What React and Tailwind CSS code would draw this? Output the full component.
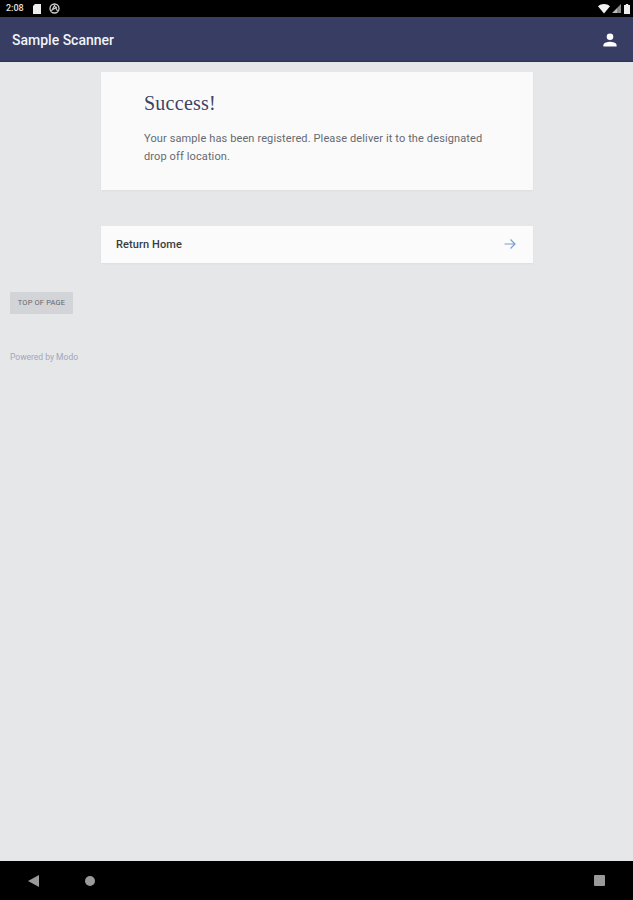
import React from "react";

export default function App() {
  return (
    <div className="flex flex-col w-[633px] h-[900px] overflow-hidden bg-[#e5e7e9] font-['Roboto',sans-serif]">
      <div className="h-[17px] shrink-0 bg-black flex items-center justify-between pl-[6px] pr-[3px]">
        <div className="flex items-center gap-[8px]">
          <span className="text-[9px] font-medium leading-none text-[#e0e0e0]">2:08</span>
          <svg width="8" height="10" viewBox="0 0 8 10" className="ml-[1px]"><path d="M2 0h6v10H0V2z" fill="#eee" /></svg>
          <svg width="11" height="11" viewBox="0 0 11 11"><circle cx="5.5" cy="5.5" r="4.5" fill="none" stroke="#ccc" strokeWidth="1.3" /><path d="M2.5 8 5.5 2.5 8.5 8M4 6.5 8 4" fill="none" stroke="#ccc" strokeWidth="1.2" /></svg>
        </div>
        <div className="flex items-center gap-[2px]">
          <svg width="12" height="10" viewBox="0 0 12 10"><path d="M0 2.2C3.4-.7 8.6-.7 12 2.2L6 9.5z" fill="#f2f2f2" /></svg>
          <svg width="9" height="9" viewBox="0 0 9 9"><path d="M9 0v9H0z" fill="#8a8a8a" /><path d="M5 4.5V9H0.5z" fill="#bbb" /></svg>
          <svg width="6" height="10" viewBox="0 0 6 10" className="ml-[1px]"><path d="M1.8 0h2.4v1H6v9H0V1h1.8z" fill="#eee" /></svg>
        </div>
      </div>

      <header className="h-[45px] shrink-0 bg-[#373d63] flex items-center justify-between pl-3 pr-[14px] pt-[2px] border-b border-[#2e3353]">
        <span className="text-[14px] font-medium text-[#f2f3f8]">Sample Scanner</span>
        <svg width="18" height="18" viewBox="0 0 24 24" fill="#ffffff"><path d="M12 12a4.4 4.4 0 1 0 0-8.800 4.400 4.400 0 0 0 0 8.800zm0 2.200c-2.900 0-8.800 1.500-8.800 4.400v2.200h17.600v-2.200c0-2.900-5.900-4.400-8.800-4.400z" /></svg>
      </header>

      <main className="flex-1 flex flex-col">
        <div className="mt-[10px] ml-[101px] w-[432px] h-[118px] bg-[#fafafa] shadow-[0_1px_2px_rgba(0,0,0,0.04)] pl-[43px] pr-[30px] pt-[19px]">
          <h1 className="font-['Liberation_Serif',serif] text-[20px] leading-[24px] text-[#3d4364] tracking-[0.25px]">Success!</h1>
          <p className="mt-[15px] text-[11px] leading-[17.5px] text-[#666a70] tracking-[0.12px]">Your sample has been registered. Please deliver it to the designated<br />drop off location.</p>
        </div>

        <div className="mt-[36px] ml-[101px] w-[432px] h-[37px] bg-[#fbfbfb] shadow-[0_1px_2px_rgba(0,0,0,0.04)] flex items-center justify-between pl-[15px] pr-[17px]">
          <span className="pt-[1px] text-[11px] font-medium text-[#3a3b40] tracking-[0.1px]">Return Home</span>
          <svg width="12" height="12" viewBox="0 0 12 12" fill="none" stroke="#7c9fd0" strokeWidth="1.2" className="-mt-[1px]"><path d="M0.500 6h10.500M6.500 1.500 11 6l-4.500 4.500" /></svg>
        </div>

        <div className="mt-[29px] ml-[10px] w-[63px] h-[22px] bg-[#d2d4d8] rounded-[1px] flex items-center justify-center">
          <span className="text-[7.5px] text-[#63666e] whitespace-nowrap tracking-[0.15px]">TOP OF PAGE</span>
        </div>

        <div className="mt-[38px] ml-[10px] text-[8.5px] leading-[10px] text-[#a3a6ba]">Powered by Modo</div>
      </main>

      <div className="h-[39px] shrink-0 bg-black flex items-center justify-between pl-[28px] pr-[28px]">
        <div className="flex items-center gap-[46px]">
          <svg width="11" height="12" viewBox="0 0 11 12"><path d="M11 0v12L0 6z" fill="#9a9a9a" /></svg>
          <div className="w-[10px] h-[10px] rounded-full bg-[#9a9a9a]" />
        </div>
        <div className="w-[11px] h-[11px] rounded-[1px] bg-[#9a9a9a]" />
      </div>
    </div>
  );
}
